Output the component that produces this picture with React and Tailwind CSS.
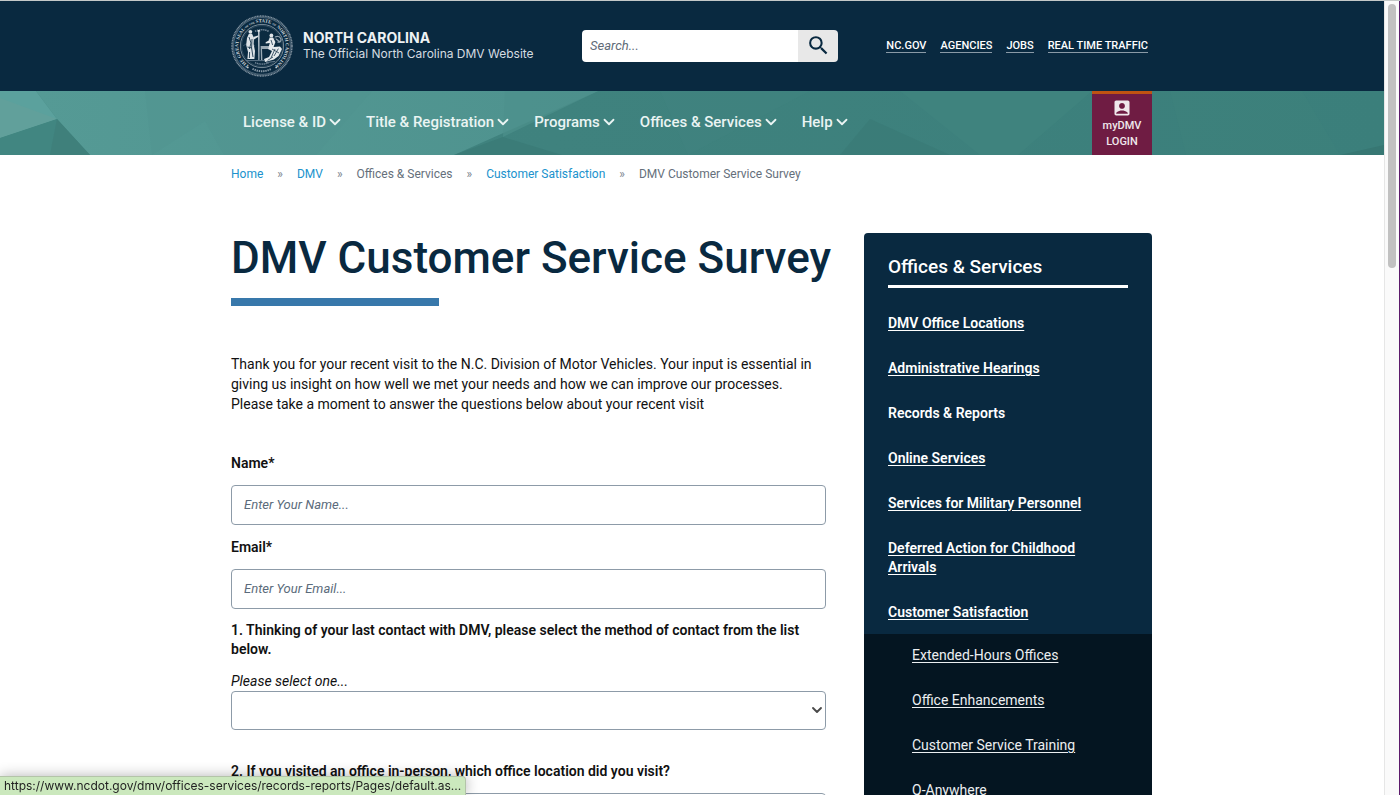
import { ChevronDown } from "lucide-react";
import { MdAccountBox, MdSearch } from "react-icons/md";

const navItems = ["License & ID", "Title & Registration", "Programs", "Offices & Services", "Help"];

const utilityLinks = ["NC.GOV", "AGENCIES", "JOBS", "REAL TIME TRAFFIC"];

const crumbs = [
  { label: "Home", link: true },
  { label: "DMV", link: true },
  { label: "Offices & Services", link: false },
  { label: "Customer Satisfaction", link: true },
  { label: "DMV Customer Service Survey", link: false },
];

const sideLinks = [
  { label: "DMV Office Locations" },
  { label: "Administrative Hearings" },
  { label: "Records & Reports", hovered: true },
  { label: "Online Services" },
  { label: "Services for Military Personnel" },
  { label: "Deferred Action for Childhood Arrivals" },
  { label: "Customer Satisfaction" },
];

const subLinks = ["Extended-Hours Offices", "Office Enhancements", "Customer Service Training", "Q-Anywhere"];

function StateSeal() {
  return (
    <svg viewBox="0 0 62 62" className="size-[62px] shrink-0" aria-hidden="true">
      <defs>
        <path id="seal-top" d="M18.2 50.7 A23.6 23.6 0 1 1 43.8 50.7" />
      </defs>
      <circle cx="31" cy="31" r="30" fill="#2b475c" stroke="#8a9aa7" strokeWidth="1.4" strokeDasharray="1 .6" />
      <circle cx="31" cy="31" r="28.4" fill="#092940" stroke="#6f8392" strokeWidth=".6" />
      <circle cx="31" cy="31" r="21.6" fill="#0b2b41" stroke="#8395a2" strokeWidth=".9" />
      <circle cx="31" cy="31" r="20.4" fill="none" stroke="#4a6274" strokeWidth=".5" />
      <text fill="#d3dadf" fontFamily="Liberation Serif, serif" fontWeight="700" fontSize="4.8">
        <textPath href="#seal-top" startOffset="50%" textAnchor="middle">
          THE GREAT SEAL <tspan fontSize="2.8">OF THE</tspan> STATE <tspan fontSize="2.8">OF</tspan> NORTH CAROLINA
        </textPath>
      </text>
      <path d="M24 16.4 Q31 13 38 16.4" fill="none" stroke="#75899a" strokeWidth="1.6" strokeDasharray="1.4 .7" />
      <path d="M21.5 53.8 Q31 58.6 40.5 53.8" fill="none" stroke="#8698a5" strokeWidth="2" strokeDasharray="1.4 .8" />
      <path d="M24 47.6 Q31 50.6 38 47.6" fill="none" stroke="#75899a" strokeWidth="1.4" strokeDasharray="1.2 .6" />
      <circle cx="16.8" cy="52.4" r=".9" fill="#c5ced5" />
      <circle cx="45.2" cy="52.4" r=".9" fill="#c5ced5" />
      <path d="M12 31 L18 27 L24 31 M37 25 L44 23 L50 27" fill="none" stroke="#41596c" strokeWidth=".8" />
      <circle cx="19.4" cy="16.8" r="1.9" fill="#dfe5e9" />
      <path d="M17.8 19 L21 18.8 L23 23 L22.6 29 L24 36 L23.4 44 L16.4 44 L17 37 L15.2 30 L16 23 Z" fill="#dde3e7" />
      <path d="M18 22 L20 28 L18.4 34 M21 24 L20.6 33 L22 42 M18.6 37 L18.4 43 M16.4 32 L21 33" fill="none" stroke="#1c394e" strokeWidth=".9" />
      <path d="M22.4 22 L27 20.4 L27.4 21.8 L23 24.6 Z" fill="#dde3e7" />
      <path d="M27 15 L28.6 15 L28.4 45 L27.4 45 Z" fill="#c5ced5" />
      <path d="M26.2 16.4 Q27.8 13.8 29.4 16.4 Z" fill="#e7ecef" />
      <path d="M29.6 31 L38 31 L37.6 34 L31 34 L31.4 45 L30 45 Z" fill="#9aaab5" />
      <circle cx="40.4" cy="20.4" r="1.9" fill="#dfe5e9" />
      <path d="M38.6 22.6 L42 22.4 L44.4 27 L42.6 32 L49 31.4 L51 34 L47.6 41 L43 44.6 L34 47 L33 44 L38 42 L41 36 L37 34 L38.8 28 L34.8 28.6 L34.6 27.2 L37.8 25.4 Z" fill="#e4e9ec" />
      <path d="M40 25 L41.6 30 M44 34 L40 43 M47.4 33.6 L43 41 M41 34 L48 38 M36.6 45.4 L42 42" fill="none" stroke="#1c394e" strokeWidth=".8" />
      <path d="M44 22 Q48 20 50 24 Q50 28 46.4 27 M45 24 L49 27" fill="none" stroke="#8fa0ac" strokeWidth="1.2" />
      <path d="M15 45.6 L33 45.6 M35 47.6 L44 46.4" stroke="#61788a" strokeWidth="1" />
    </svg>
  );
}

function NavBackdrop() {
  return (
    <svg
      viewBox="0 0 1384 64"
      preserveAspectRatio="none"
      className="absolute inset-0 size-full"
      aria-hidden="true"
    >
      <defs>
        <linearGradient id="teal-light" x1="0" x2="1">
          <stop offset="0" stopColor="#559a95" />
          <stop offset="1" stopColor="#4e928e" />
        </linearGradient>
        <linearGradient id="teal-dark" x1="0" x2="1">
          <stop offset="0" stopColor="#428580" />
          <stop offset=".4" stopColor="#3f827e" />
          <stop offset="1" stopColor="#3b7f7b" />
        </linearGradient>
      </defs>
      <rect width="1384" height="64" fill="url(#teal-dark)" />
      <path d="M36 0 H598 L454 64 H90 L57 28 Z" fill="url(#teal-light)" />
      <path d="M0 0 H36 L57 28 L0 47 Z" fill="#5ba19d" />
      <path d="M0 7 L57 28 L0 47 Z" fill="#61a09b" />
      <path d="M0 47 L57 28 L50 64 H0 Z" fill="#418681" />
      <path d="M57 28 L90 64 H50 Z" fill="#3f807b" />
      <path d="M145 0 H372 L316 64 H224 L205 30 L152 64 Z" fill="#4f938e" fillOpacity=".3" />
      <path d="M505 0 H598 L503 46 Z" fill="#4d908c" fillOpacity=".7" />
      <path d="M503 46 L454 64 H562 Z" fill="#3b7c78" />
      <path d="M660 0 H810 L688 64 Z" fill="#438680" fillOpacity=".3" />
      <path d="M870 28 L950 64 H840 Z" fill="#387773" fillOpacity=".5" />
      <path d="M900 0 H1092 L1018 64 H980 Z" fill="#40847f" fillOpacity=".7" />
      <path d="M1170 0 H1302 L1340 64 H1186 Z" fill="#3e827d" fillOpacity=".4" />
      <path d="M1340 64 L1384 54 V64 Z" fill="#377773" />
    </svg>
  );
}

function SiteHeader() {
  return (
    <header className="bg-[#092940]">
      <div className="mx-auto flex h-[90px] w-[922px] max-w-full items-center pr-px">
        <a href="#home" className="flex w-[351px] items-center gap-2.5 font-['Inter',sans-serif] text-white">
          <StateSeal />
          <span className="flex flex-col whitespace-nowrap">
            <span className="text-[14px] leading-4 font-bold text-[#eef2f4]">NORTH CAROLINA</span>
            <span className="text-[12px] leading-4 text-[#d5dce1]">The Official North Carolina DMV Website</span>
          </span>
        </a>
        <form className="flex h-8 w-64 overflow-hidden rounded-sm" role="search">
          <input
            type="text"
            aria-label="Search"
            placeholder="Search..."
            className="min-w-0 flex-1 bg-white px-2 text-[13px] text-[#092940] placeholder:text-[#5f6b78] placeholder:italic"
          />
          <button type="button" aria-label="Search" className="flex w-10 items-center justify-center bg-[#e8e8e8] pb-0.5">
            <MdSearch className="size-[25px] text-[#092940]" />
          </button>
        </form>
        <nav aria-label="State links" className="ml-auto flex gap-3.5 pr-1 text-[11px] leading-3 font-medium text-white">
          {utilityLinks.map((label) => (
            <a key={label} href="#link" className="border-b border-[#8a9aa7] whitespace-nowrap">
              {label}
            </a>
          ))}
        </nav>
      </div>
    </header>
  );
}

function MainNav() {
  return (
    <div className="relative h-16">
      <NavBackdrop />
      <div className="relative mx-auto flex h-full w-[922px] max-w-full justify-between pr-px pl-3">
        <nav aria-label="Main" className="flex items-center gap-[22px] pb-0.5">
          {navItems.map((label) => (
            <button
              key={label}
              type="button"
              className="flex items-center text-[15px] leading-5 font-medium whitespace-nowrap text-[#eaf4f3]"
            >
              {label}
              <ChevronDown className="size-[18px]" strokeWidth={2.4} />
            </button>
          ))}
        </nav>
        <a
          href="#login"
          className="flex w-15 flex-col items-center border-t-3 border-[#bf5312] bg-[#6f1c43] pt-1 text-center text-[11px] leading-4 font-medium text-[#f0e8ec]"
        >
          <MdAccountBox className="size-5" />
          <span>
            myDMV
            <br />
            LOGIN
          </span>
        </a>
      </div>
    </div>
  );
}

function Breadcrumbs() {
  return (
    <nav aria-label="Breadcrumb" className="pt-2.5">
      <ol className="flex gap-3.5 text-[12px] leading-[18px] whitespace-nowrap text-[#656f7b]">
        {crumbs.map(({ label, link }, index) => (
          <li key={label} className="flex gap-3.5">
            {index > 0 && <span className="text-[#7b858f]">»</span>}
            {link ? (
              <a href="#crumb" className="text-[#2092cd]">
                {label}
              </a>
            ) : (
              <span>{label}</span>
            )}
          </li>
        ))}
      </ol>
    </nav>
  );
}

function TextField({ id, label, type, placeholder }) {
  return (
    <div className="flex flex-col">
      <label htmlFor={id} className="flex h-11 items-center text-[14px] leading-5 font-semibold">
        {label}*
      </label>
      <input
        id={id}
        type={type}
        placeholder={placeholder}
        className="h-10 rounded-sm border border-[#8d9ba8] px-3 pb-0.5 text-[13px] placeholder:text-[#5b6b7b] placeholder:italic"
      />
    </div>
  );
}

function SelectBox({ id }) {
  return (
    <span className="relative block">
      <select id={id} className="block h-[39px] w-full appearance-none rounded-sm border border-[#8d9ba8] bg-white px-3" defaultValue="">
        <option value=""></option>
      </select>
      <ChevronDown className="pointer-events-none absolute top-[11px] right-px size-4 text-[#4a4a4a]" strokeWidth={2.8} />
    </span>
  );
}

function SurveyForm() {
  return (
    <main className="min-w-0 flex-1">
      <h1 className="text-[44px] leading-[50px] font-medium whitespace-nowrap text-[#092940]">DMV Customer Service Survey</h1>
      <div className="mt-[15px] h-2 w-[35%] bg-[#3878ab]" />
      <div className="mt-12 text-[14px] leading-5 text-[#111]">
        <p>
          Thank you for your recent visit to the N.C. Division of Motor Vehicles. Your input is essential in giving us
          insight on how well we met your needs and how we can improve our processes.
        </p>
        <p>Please take a moment to answer the questions below about your recent visit</p>
      </div>
      <form className="mt-[27px] text-[#111]">
        <TextField id="name" label="Name" type="text" placeholder="Enter Your Name..." />
        <TextField id="email" label="Email" type="email" placeholder="Enter Your Email..." />
        <label htmlFor="contact" className="mt-3 block text-[14px] leading-[19px] font-semibold">
          1. Thinking of your last contact with DMV, please select the method of contact from the list below.
          <span className="mt-3 block text-[14px] leading-5 font-normal italic">Please select one...</span>
        </label>
        <SelectBox id="contact" />
        <label htmlFor="office" className="mt-8 mb-3 block text-[14px] leading-[19px] font-semibold">
          2. If you visited an office in-person, which office location did you visit?
        </label>
        <SelectBox id="office" />
      </form>
    </main>
  );
}

function Sidebar() {
  return (
    <aside className="w-72 shrink-0 rounded-sm bg-[#092940] pt-[22px] text-white">
      <div className="px-6">
        <h2 className="border-b-3 border-white pb-1.5 text-[19px] leading-6 font-medium">Offices &amp; Services</h2>
      </div>
      <ul className="flex flex-col gap-[26px] pt-[26px] pr-10 pb-3 pl-6 text-[14px] leading-[19px] font-semibold">
        {sideLinks.map(({ label, hovered }) => (
          <li key={label}>
            <a href="#side" className={hovered ? "no-underline" : "underline underline-offset-2"}>
              {label}
            </a>
          </li>
        ))}
      </ul>
      <ul className="flex flex-col gap-[26px] bg-[#041521] px-12 pt-3 pb-6 text-[14px] leading-[19px] text-[#eceff1]">
        {subLinks.map((label) => (
          <li key={label}>
            <a href="#sub" className="underline underline-offset-2">
              {label}
            </a>
          </li>
        ))}
      </ul>
    </aside>
  );
}

export default function App() {
  return (
    <div className="flex h-screen overflow-hidden border-t border-[#c4c8c8] bg-white font-['Roboto',sans-serif]">
      <div className="min-w-0 flex-1 overflow-hidden">
        <SiteHeader />
        <MainNav />
        <div className="mx-auto w-[922px] max-w-full pr-px">
          <Breadcrumbs />
          <div className="mt-[50px] flex gap-[38px]">
            <SurveyForm />
            <Sidebar />
          </div>
        </div>
      </div>
      <div className="w-4 border-r border-l border-r-[#5c1a6b] border-l-[#e6e6e6] bg-[#fafafa] px-[3px] pt-[3px]">
        <div className="h-[264px] rounded-full bg-[#c1c1c1]" />
      </div>
      <div className="fixed bottom-0 left-0 rounded-tr-sm border-t border-r border-[#b3c4a8] bg-[#cbe8bd] px-1 font-['Inter',sans-serif] text-[12px] leading-[18px] text-[#222] shadow-[0_0_14px_rgba(0,0,0,0.3)]">
        https://www.ncdot.gov/dmv/offices-services/records-reports/Pages/default.as...
      </div>
    </div>
  );
}
